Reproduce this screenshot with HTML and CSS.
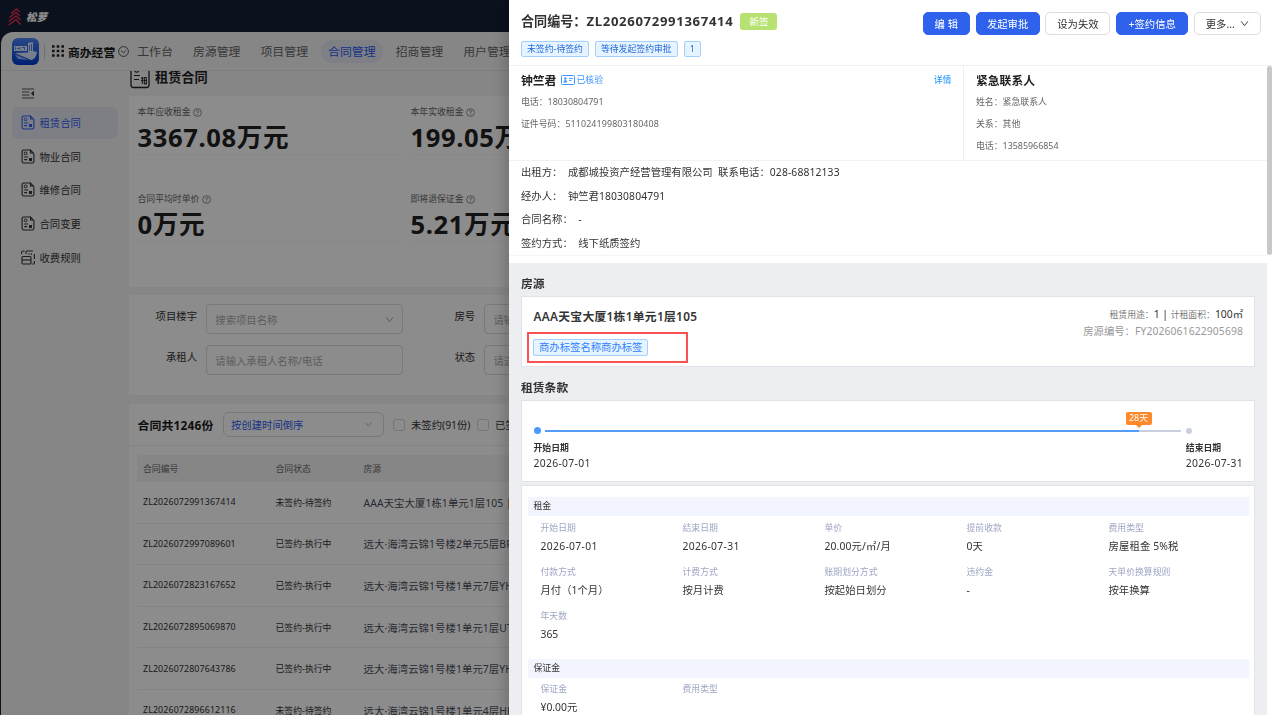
FILE: index.html
```html
<!DOCTYPE html>
<html lang="zh-CN">
<head>
    <meta charset="UTF-8">
    <meta name="viewport" content="width=device-width, initial-scale=1.0">
    <title>租赁合同</title>
    <link rel="stylesheet" href="styles.css">
</head>
<body>
    <!-- shared icons -->
    <svg class="sprite" width="0" height="0">
        <symbol id="doc" viewBox="0 0 14 15">
            <path d="M9 1H2.6Q1.1 1 1.1 2.5v10Q1.1 14 2.6 14h8.8q1.5 0 1.5-1.500V4.600L9.500 1v3h3.200" fill="none" stroke="currentColor" stroke-width="1.100"/>
            <circle cx="4.600" cy="4.400" r="1.400" fill="none" stroke="currentColor"/>
            <path d="M3.200 8h4M3.200 10.600h3" stroke="currentColor" stroke-width="1.100"/>
            <path d="M8 9h3v3H8z" fill="currentColor"/>
        </symbol>
        <symbol id="help" viewBox="0 0 10 10">
            <circle cx="5" cy="5" r="4.300" fill="none" stroke="currentColor" stroke-width=".8"/>
            <path d="M3.700 4q0-1.300 1.300-1.300T6.300 3.900Q6.300 4.700 5 5.200v.7M5 6.700v.8" fill="none" stroke="currentColor" stroke-width=".8"/>
        </symbol>
        <symbol id="down" viewBox="0 0 10 10">
            <path d="M1.300 2.500 5 7.500l3.700-5" fill="none" stroke="currentColor" stroke-width="1"/>
        </symbol>
    </svg>

    <div class="app">
        <div class="topbar">
            <svg class="brand-icon" width="14" height="18" viewBox="0 0 14 18">
                <path d="M3 5.500 8.500 1l3 3M1.500 9.500 8 4.500l4 3.500M.8 13.500 8 8l4.500 4M.8 17 8 11.500l4.500 5" fill="none" stroke="#e8304f" stroke-width="1.400"/>
            </svg>
            <span class="brand-name">松萝</span>
        </div>

        <div class="shell">
            <div class="header">
                <svg class="app-logo" width="27" height="27" viewBox="0 0 27 27">
                    <defs>
                        <linearGradient id="blue" x1="0" y1="0" x2="0" y2="1">
                            <stop offset="0" stop-color="#4b86f5"/>
                            <stop offset="1" stop-color="#0038d0"/>
                        </linearGradient>
                    </defs>
                    <rect width="27" height="27" rx="6" fill="url(#blue)"/>
                    <path d="M2 8h13v5H2zM16 5l5-1v9l4 1q-1 7-6 8L3 15l13-.5z" fill="#dbe7ff"/>
                    <path d="M3.500 9v3M5 10.500h2M8 9v3M10 9.500h2M12.500 9v3M17.500 7v6M19.500 6v7" stroke="#3469dc" stroke-width=".8" fill="none"/>
                    <path d="M3 16.500l14 5.500-11-1z" fill="#8fb2ff"/>
                </svg>
                <span class="split"></span>
                <svg class="apps" width="12" height="12" viewBox="0 0 12 12">
                    <path d="M0 1.500h12M0 6h12M0 10.500h12" stroke="#222" stroke-width="2.600" stroke-dasharray="2.600 2.100"/>
                </svg>
                <b class="app-name">商办经营</b>
                <svg class="round-down" width="11" height="11" viewBox="0 0 11 11" fill="none" stroke="#444" stroke-width=".9">
                    <circle cx="5.500" cy="5.500" r="4.900"/>
                    <path d="M3 4.500l2.500 2.400L8 4.500"/>
                </svg>
                <div class="nav">
                    <span class="nav-item">工作台</span>
                    <span class="nav-item">房源管理</span>
                    <span class="nav-item">项目管理</span>
                    <span class="nav-item active">合同管理</span>
                    <span class="nav-item">招商管理</span>
                    <span class="nav-item">用户管理</span>
                </div>
            </div>

            <div class="main">
                <div class="sidebar">
                    <svg class="fold" width="12" height="11" viewBox="0 0 12 11">
                        <path d="M0 1h12M0 4h7.500M0 7h7.500M0 10h12" stroke="#555" stroke-width="1"/>
                        <path d="M12 2.800v5.400L8.800 5.500z" fill="#333"/>
                    </svg>
                    <div class="menu-item active"><svg class="menu-icon"><use href="#doc"/></svg>租赁合同</div>
                    <div class="menu-item"><svg class="menu-icon"><use href="#doc"/></svg>物业合同</div>
                    <div class="menu-item"><svg class="menu-icon"><use href="#doc"/></svg>维修合同</div>
                    <div class="menu-item"><svg class="menu-icon"><use href="#doc"/></svg>合同变更</div>
                    <div class="menu-item">
                        <svg class="menu-icon" viewBox="0 0 14 15" fill="none" stroke="currentColor" stroke-width="1.100">
                            <path d="M.6 4V2.500Q.6 1 2 1h1.500M5 4V2Q5 1 6 1h6M13.400 4v5M8 3.300v1.500M10.500 3.300v1.500M13.400 11v2q0 1-1 1h-1"/>
                            <rect x="1" y="6.500" width="9" height="7.500" rx="1"/>
                            <path d="M1 10h9"/>
                        </svg>收费规则
                    </div>
                </div>

                <div class="content">
                    <div class="page-title">
                        <svg width="20" height="26" viewBox="0 0 20 26">
                            <path d="M3 1Q1 1 1 3v19q0 2.500 2.500 2.500h13Q19 24.500 19 22V3" fill="none" stroke="#222" stroke-width="1.300"/>
                            <path d="M4.500 7.500Q6.500 11 9 7.500M4 12.500h6M4 16.500h5" fill="none" stroke="#222" stroke-width="1.200"/>
                            <path d="M11 15h2.500M12.300 14v7M11 17.500h2.500M14.300 21V14.500h2V21M14 17.500h2.500M14 20.800h3" fill="none" stroke="#222" stroke-width="1"/>
                        </svg>
                        <b>租赁合同</b>
                    </div>

                    <div class="card stats">
                        <div class="stat">
                            <div class="stat-label">本年应收租金<svg class="help"><use href="#help"/></svg></div>
                            <div class="stat-value">3367.08万元</div>
                        </div>
                        <div class="stat">
                            <div class="stat-label">本年实收租金<svg class="help"><use href="#help"/></svg></div>
                            <div class="stat-value">199.05万元</div>
                        </div>
                        <div class="stat">
                            <div class="stat-label">合同平均时单价<svg class="help"><use href="#help"/></svg></div>
                            <div class="stat-value">0万元</div>
                        </div>
                        <div class="stat">
                            <div class="stat-label">即将退保证金<svg class="help"><use href="#help"/></svg></div>
                            <div class="stat-value">5.21万元</div>
                        </div>
                    </div>

                    <div class="card filters">
                        <label>项目楼宇</label>
                        <div class="field">搜索项目名称<svg class="arrow"><use href="#down"/></svg></div>
                        <label>房号</label>
                        <div class="field">请输入房号</div>
                        <label>承租人</label>
                        <div class="field">请输入承租人名称/电话</div>
                        <label>状态</label>
                        <div class="field">请选择状态</div>
                    </div>

                    <div class="card list">
                        <div class="list-head">
                            <b>合同共1246份</b>
                            <div class="sort">按创建时间倒序<svg class="arrow small"><use href="#down"/></svg></div>
                            <i class="check"></i><span>未签约(91份)</span>
                            <i class="check"></i><span>已签约</span>
                        </div>
                        <div class="table">
                            <div class="tr th"><span>合同编号</span><span>合同状态</span><span>房源</span></div>
                            <div class="tr"><span class="code">ZL2026072991367414</span><span>未签约-待签约</span><span class="room">AAA天宝大厦1栋1单元1层105 <i class="mark"></i></span></div>
                            <div class="tr"><span class="code">ZL2026072997089601</span><span>已签约-执行中</span><span class="room">远大·海湾云锦1号楼2单元5层BF</span></div>
                            <div class="tr"><span class="code">ZL2026072823167652</span><span>已签约-执行中</span><span class="room">远大·海湾云锦1号楼1单元7层YH</span></div>
                            <div class="tr"><span class="code">ZL2026072895069870</span><span>已签约-执行中</span><span class="room">远大·海湾云锦1号楼1单元1层UT</span></div>
                            <div class="tr"><span class="code">ZL2026072807643786</span><span>已签约-执行中</span><span class="room">远大·海湾云锦1号楼1单元7层YH</span></div>
                            <div class="tr"><span class="code">ZL2026072896612116</span><span>未签约-待签约</span><span class="room">远大·海湾云锦1号楼1单元4层HF</span></div>
                        </div>
                    </div>
                </div>
            </div>
        </div>
    </div>

    <div class="mask"></div>

    <div class="drawer">
        <div class="drawer-head">
            <div class="drawer-title">
                <div class="contract-no">合同编号：<span class="no">ZL2026072991367414</span><em class="new">新签</em></div>
                <div class="tags">
                    <span class="tag">未签约-待签约</span>
                    <span class="tag">等待发起签约审批</span>
                    <span class="tag">1</span>
                </div>
            </div>
            <div class="actions">
                <button class="btn primary w47">编 辑</button>
                <button class="btn primary w64">发起审批</button>
                <button class="btn w65">设为失效</button>
                <button class="btn primary w72">+签约信息</button>
                <button class="btn w67">更多...<svg class="more"><use href="#down"/></svg></button>
            </div>
        </div>

        <div class="drawer-body">
            <div class="scroll">
                <div class="people">
                    <div class="tenant">
                        <div class="name">
                            <b>钟竺君</b>
                            <svg width="14" height="10" viewBox="0 0 14 10">
                                <rect x=".5" y=".5" width="13" height="9" rx="1" fill="none" stroke="#4096ff"/>
                                <circle cx="4.300" cy="3.500" r="1.200" fill="#4096ff"/>
                                <path d="M2.300 7.500q0-2.500 2-2.500t2 2.500z" fill="#4096ff"/>
                                <path d="M8 3.500h4M8 5.500h2.500" stroke="#4096ff" stroke-width=".9"/>
                            </svg>
                            <span class="verified">已核验</span>
                            <a class="detail">详情</a>
                        </div>
                        <p>电话：18030804791</p>
                        <p>证件号码：<span class="code">511024199803180408</span></p>
                    </div>
                    <div class="contact">
                        <div class="name"><b>紧急联系人</b></div>
                        <p>姓名：紧急联系人</p>
                        <p>关系：其他</p>
                        <p>电话：13585966854</p>
                    </div>
                </div>

                <div class="base-info">
                    <p><label>出租方：</label>成都城投资产经营管理有限公司&nbsp; 联系电话：<span class="code">028-68812133</span></p>
                    <p><label>经办人：</label>钟竺君<span class="code">18030804791</span></p>
                    <p><label>合同名称：</label>-</p>
                    <p><label>签约方式：</label>线下纸质签约</p>
                </div>

                <div class="sections">
                    <h3>房源</h3>
                    <div class="box house">
                        <div>
                            <div class="house-name">AAA天宝大厦1栋1单元1层105</div>
                            <span class="tag house-tag">商办标签名称商办标签</span>
                        </div>
                        <div class="house-side">
                            <div><small>租赁用途：</small>1 | <small>计租面积：</small>100㎡</div>
                            <div class="house-no">房源编号：<span class="code">FY2026061622905698</span></div>
                        </div>
                        <div class="outline"></div>
                    </div>

                    <h3>租赁条款</h3>
                    <div class="box period">
                        <div class="track">
                            <i class="dot on"></i>
                            <div class="line"><div class="passed"><span class="days">28天</span></div></div>
                            <i class="dot"></i>
                        </div>
                        <div class="dates">
                            <div><b>开始日期</b><span class="num">2026-07-01</span></div>
                            <div><b>结束日期</b><span class="num">2026-07-31</span></div>
                        </div>
                    </div>

                    <div class="box terms">
                        <h4>租金</h4>
                        <div class="grid">
                            <div><label>开始日期</label><span class="num">2026-07-01</span></div>
                            <div><label>结束日期</label><span class="num">2026-07-31</span></div>
                            <div><label>单价</label><span class="code">20.00元/㎡/月</span></div>
                            <div><label>提前收款</label>0天</div>
                            <div><label>费用类型</label><span class="code">房屋租金 5%税</span></div>
                            <div><label>付款方式</label>月付（1个月）</div>
                            <div><label>计费方式</label>按月计费</div>
                            <div><label>账期划分方式</label>按起始日划分</div>
                            <div><label>违约金</label>-</div>
                            <div><label>天单价换算规则</label>按年换算</div>
                            <div><label>年天数</label>365</div>
                        </div>
                        <h4>保证金</h4>
                        <div class="grid">
                            <div><label>保证金</label>¥0.00元</div>
                            <div><label>费用类型</label></div>
                        </div>
                    </div>
                </div>
            </div>
            <div class="scrollbar"><div class="thumb"></div></div>
        </div>
    </div>
</body>
</html>
```

FILE: styles.css
```css
* {
    margin: 0;
    padding: 0;
    box-sizing: border-box;
}

body {
    width: 100vw;
    height: 100vh;
    overflow: hidden;
    font-family: "Noto Sans", "Noto Sans CJK SC", sans-serif;
    font-size: 10.35px;
    color: #333;
    background: #161f38;
}

.sprite {
    position: absolute;
}

i, em {
    font-style: normal;
}

.num {
    letter-spacing: 0.32px;
}

.code {
    letter-spacing: 0.12px;
}

/* page behind the drawer */
.app {
    height: 100vh;
    overflow: hidden;
    display: flex;
    flex-direction: column;
}

.topbar {
    height: 32px;
    flex: none;
    display: flex;
    align-items: center;
    padding: 1px 0 0 8px;
}

.brand-name {
    margin-left: 4px;
    color: #fff;
    font-size: 10.5px;
    font-weight: 900;
    font-style: italic;
}

.shell {
    flex: 1;
    min-height: 0;
    margin-left: 1px;
    border-radius: 12px 0 0 0;
    background: #f4f4f5;
    overflow: hidden;
    display: flex;
    flex-direction: column;
}

.header {
    height: 39px;
    flex: none;
    display: flex;
    align-items: center;
    padding-left: 11px;
    border-bottom: 1px solid #e4e4e4;
}

.split {
    width: 1px;
    height: 15px;
    margin: 0 7px 0 5px;
    background: #ccc;
}

.app-name {
    margin: 0 3px 0 4px;
    font-size: 11.8px;
    color: #1a1a1a;
    white-space: nowrap;
}

.nav {
    display: flex;
    font-size: 11.9px;
    color: #666;
    white-space: nowrap;
}

.nav-item {
    height: 23px;
    line-height: 22px;
    padding: 0 7px;
    margin-right: 6px;
    border-radius: 12px;
}

.nav-item:first-child {
    margin-left: 1px;
}

.nav-item.active {
    color: #2f5cf0;
    background: #e6e9f4;
}

.main {
    flex: 1;
    min-height: 0;
    display: flex;
}

.sidebar {
    width: 128px;
    flex: none;
    padding: 17px 11px;
}

.fold {
    display: block;
    margin: 0 0 8px 10px;
}

.menu-item {
    height: 32px;
    margin-bottom: 1.8px;
    padding: 0 0 1.500px 9px;
    border-radius: 6px;
    display: flex;
    align-items: center;
    gap: 4.500px;
    color: #333;
}

.menu-item.active {
    background: #e6e8f1;
    color: #2f5cf0;
}

.menu-icon {
    width: 14px;
    height: 15px;
}

.content {
    flex: 1;
    min-width: 0;
    overflow: hidden;
}

.page-title {
    height: 25px;
    display: flex;
    align-items: center;
    gap: 5px;
    padding-left: 1px;
    font-size: 13.2px;
    color: #222;
}

.page-title svg {
    margin-top: -16px;
}

.page-title b {
    margin-top: -14px;
}

.card {
    background: #fff;
    overflow: hidden;
}

.stats {
    height: 191px;
    padding: 9px 0 0 8.500px;
    display: grid;
    grid-template-columns: repeat(2, 261px);
    column-gap: 12px;
    grid-auto-rows: 87px;
}

.stat-label {
    height: 14px;
    display: flex;
    align-items: center;
    font-size: 8.85px;
    line-height: 14px;
    color: #666;
}

.help {
    width: 9px;
    height: 9px;
    margin-left: 2.500px;
}

.stat-value {
    height: 36px;
    line-height: 38px;
    border-bottom: 1px solid #f6f6f6;
    font-size: 25.6px;
    font-weight: bold;
    letter-spacing: 0.6px;
    color: #222;
    white-space: nowrap;
}

.filters {
    height: 100px;
    margin-top: 8px;
    padding: 9px 0 0;
    display: grid;
    grid-template-columns: 68px 197px 62.500px 197px;
    column-gap: 9.300px;
    grid-auto-rows: 30px;
    row-gap: 11px;
}

.filters label {
    text-align: right;
    line-height: 25px;
}

.field {
    border: 1px solid #dcdcdc;
    border-radius: 4px;
    padding: 0 8px;
    display: flex;
    align-items: center;
    justify-content: space-between;
    color: #aaa;
}

.arrow {
    width: 9px;
    height: 9px;
    color: #999;
}

.arrow.small {
    width: 7px;
    height: 7px;
    margin-right: 3px;
}

.list {
    height: 320px;
    margin-top: 9px;
}

.list-head {
    height: 42px;
    padding-left: 8.500px;
    border-bottom: 1px solid #eee;
    display: flex;
    align-items: center;
    white-space: nowrap;
}

.list-head b {
    width: 85.500px;
    font-size: 11.9px;
    letter-spacing: 0.15px;
    color: #1a1a1a;
}

.sort {
    width: 161px;
    height: 25px;
    margin-right: 9px;
    padding: 0 8px 0 7px;
    border: 1px solid #dcdcdc;
    border-radius: 6px;
    display: flex;
    align-items: center;
    justify-content: space-between;
    color: #2f5cf0;
}

.check {
    width: 12px;
    height: 12px;
    margin-right: 6px;
    border: 1px solid #d5d5d5;
    border-radius: 3px;
}

.list-head span {
    margin-right: 6.500px;
}

.table {
    margin: 9px 0 0 8px;
    font-size: 8.85px;
    white-space: nowrap;
}

.tr {
    height: 41.600px;
    padding-left: 6px;
    border-bottom: 1px solid #efefef;
    display: grid;
    grid-template-columns: 132.500px 88px 300px;
    align-items: center;
}

.tr.th {
    height: 27px;
    border: 0;
    border-radius: 4px 4px 0 0;
    background: #f5f5f5;
    color: #666;
}

.room {
    font-size: 10.35px;
    letter-spacing: 0.1px;
    color: #4a4f5c;
}

.mark {
    display: inline-block;
    width: 12px;
    height: 11px;
    margin-left: 1.500px;
    background: #ff9a62;
    vertical-align: -2px;
}

.mask {
    position: fixed;
    inset: 0;
    background: rgba(0, 0, 0, 0.45);
}

/* contract drawer */
.drawer {
    position: fixed;
    top: 0;
    right: 0;
    bottom: 0;
    width: 763px;
    background: #fff;
    box-shadow: -5px 0 12px rgba(0, 0, 0, 0.18);
    display: flex;
    flex-direction: column;
}

.drawer-head {
    height: 66px;
    flex: none;
    padding: 12px 11.500px 0 12px;
    border-bottom: 1px solid #f0f0f0;
    display: flex;
    justify-content: space-between;
}

.contract-no {
    display: flex;
    align-items: center;
    height: 20px;
    margin-top: -1.500px;
    font-size: 13.1px;
    font-weight: bold;
}

.no {
    letter-spacing: 0.68px;
}

.new {
    width: 37px;
    height: 17px;
    margin: 2px 0 0 7px;
    border-radius: 3px;
    background: #b7e170;
    color: #fff;
    font-size: 9.6px;
    font-weight: normal;
    line-height: 17px;
    text-align: center;
}

.tags {
    display: flex;
    gap: 6px;
    margin-top: 10.500px;
}

.tag {
    height: 16px;
    padding: 0 5px;
    border: 1px solid #a3d0ff;
    border-radius: 2px;
    background: #e6f4ff;
    color: #2468e0;
    font-size: 8.85px;
    line-height: 14px;
}

.actions {
    display: flex;
    gap: 5.800px;
}

.btn {
    height: 23px;
    border: 1px solid #dcdcdc;
    border-radius: 5px;
    background: #fff;
    color: #333;
    font: inherit;
    display: flex;
    align-items: center;
    justify-content: center;
    white-space: nowrap;
}

.btn.primary {
    border-color: #2f62ec;
    background: #2f62ec;
    color: #fff;
}

.w47 { width: 47px; }
.w64 { width: 64px; }
.w65 { width: 65px; }
.w72 { width: 72px; }
.w67 { width: 66.500px; }

.more {
    width: 9px;
    height: 9px;
    margin-left: 5px;
}

.drawer-body {
    flex: 1;
    min-height: 0;
    display: flex;
}

.scroll {
    flex: 1;
    min-width: 0;
    overflow: hidden;
}

.scrollbar {
    width: 5px;
}

.thumb {
    height: 189px;
    border-radius: 3px;
    background: #c8c8c8;
}

.people {
    height: 95px;
    display: flex;
    border-bottom: 1px solid #f2f2f2;
    font-size: 8.9px;
    color: #666;
}

.tenant {
    width: 455px;
    padding: 2px 11.500px 0 12px;
    border-right: 1px solid #f0f0f0;
}

.contact {
    padding: 2px 12px 0;
}

.people p {
    height: 22px;
    line-height: 22px;
}

.name {
    height: 23px;
    display: flex;
    align-items: center;
}

.name b {
    margin-right: 5px;
    font-size: 11.8px;
    color: #222;
}

.verified {
    margin-left: 1px;
    color: #4096ff;
}

.detail {
    margin-left: auto;
    color: #1890ff;
}

.base-info {
    height: 95px;
    border-bottom: 1px solid #f5f5f5;
    padding-left: 12px;
}

.base-info p {
    height: 23.500px;
    line-height: 23px;
}

.base-info label {
    margin-right: 5.500px;
}

.sections {
    margin-top: 7px;
    padding: 8px 12px 0;
    height: 460px;
    background: #edeef2;
}

h3 {
    height: 25px;
    line-height: 24px;
    font-size: 11.8px;
}

.box {
    border: 1px solid #e3e4e9;
    background: #fff;
}

.house {
    position: relative;
    height: 71px;
    margin-bottom: 8px;
    padding: 8.500px 11px 0 11.500px;
    display: flex;
    justify-content: space-between;
}

.house-name {
    height: 20px;
    margin-bottom: 13px;
    line-height: 20px;
    font-size: 11.8px;
    font-weight: 600;
    letter-spacing: 0.3px;
}

.house-tag {
    display: block;
    width: 115px;
    height: 17px;
    margin-left: -0.500px;
    line-height: 15px;
    font-size: 10.35px;
    color: #2f80ff;
    white-space: nowrap;
}

.house-side {
    padding-top: 1.500px;
    text-align: right;
    line-height: 15.800px;
}

.house-side small {
    font-size: 8.85px;
    color: #777;
}

.house-no {
    color: #999;
}

/* red frame around the room tags */
.outline {
    position: absolute;
    left: 5px;
    top: 35px;
    width: 161px;
    height: 31px;
    border: 2px solid #fa5252;
}

.period {
    height: 82px;
    margin-bottom: 3px;
    padding: 25px 11px 0 11.500px;
}

.track {
    height: 9px;
    width: 658px;
    display: flex;
    align-items: center;
}

.dot {
    width: 6px;
    height: 6px;
    border-radius: 50%;
    background: #c9cfe4;
}

.dot.on {
    width: 7px;
    height: 7px;
    background: #4c9aff;
}

.line {
    flex: 1;
    height: 2px;
    margin: 0 5px 0 4px;
    background: #c9cfe0;
}

.passed {
    position: relative;
    width: 93.400%;
    height: 2px;
    background: #549cf5;
}

.days {
    position: absolute;
    right: -13px;
    top: -18px;
    width: 26px;
    height: 13px;
    border-radius: 2px;
    background: #ff8a2b;
    color: #fff;
    font-size: 8.85px;
    line-height: 13px;
    text-align: center;
}

.days::after {
    content: "";
    position: absolute;
    left: 10px;
    top: 13px;
    border: 3px solid transparent;
    border-top-color: #ff8a2b;
    border-bottom: 0;
}

.dates {
    display: flex;
    justify-content: space-between;
    padding-top: 5.500px;
    line-height: 16px;
}

.dates b {
    display: block;
    height: 14px;
    font-size: 8.85px;
    line-height: 14px;
}

.terms {
    height: 300px;
    padding: 11px 5px 0 5.500px;
}

h4 {
    height: 19px;
    padding-left: 6px;
    background: #f2f5fd;
    font-size: 8.85px;
    font-weight: normal;
    line-height: 19px;
}

.grid {
    display: grid;
    grid-template-columns: repeat(5, 142px);
    grid-auto-rows: 44.300px;
    padding: 3.500px 0 6.500px 13px;
    line-height: 20px;
    white-space: nowrap;
}

.grid label {
    display: block;
    height: 16px;
    font-size: 8.85px;
    line-height: 17px;
    color: #9fa6c4;
}
```
